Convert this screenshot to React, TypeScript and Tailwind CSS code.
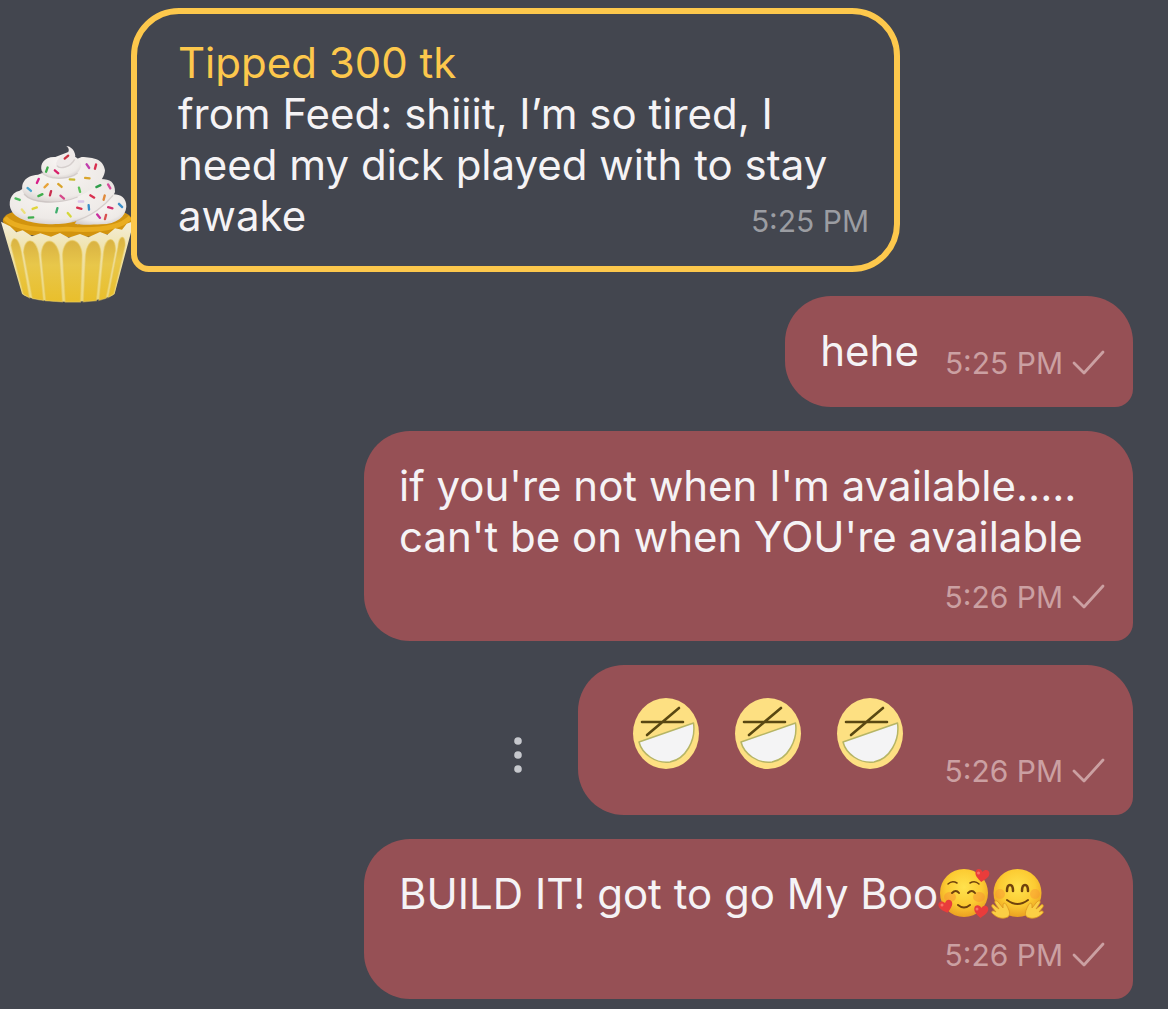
import React from 'react';
import { clsx } from 'clsx';

const SPRINKLES: [number, number, number, string][] = [
  [199, 84, -40, '#c9303f'], [141, 122, 110, '#3fae4c'], [170, 128, 40, '#d81f6a'], [264, 111, 55, '#c13fae'],
  [287, 113, 105, '#d9304f'], [114, 156, 115, '#d81f8a'], [138, 170, -45, '#e8a33a'], [180, 169, 40, '#d9a52c'],
  [216, 151, 5, '#c9b92e'], [262, 147, 5, '#d9a52c'], [239, 182, 75, '#5cc25a'], [295, 171, -25, '#2f9e4c'],
  [328, 172, 60, '#d64a9a'], [88, 181, 40, '#4aa5cf'], [121, 198, -25, '#3fae4c'], [152, 193, 105, '#c9304f'],
  [187, 204, 40, '#d64a8a'], [53, 210, 20, '#4cbb5c'], [277, 202, 30, '#d9304f'], [313, 206, 105, '#e08a3a'],
  [171, 244, 105, '#3fae6c'], [104, 237, -20, '#e0d53a'], [70, 246, 50, '#ecdf7a'], [93, 265, -5, '#3fae4c'],
  [208, 257, 50, '#d5d838'], [238, 237, 15, '#d9304f'], [267, 235, 85, '#3a8ec9'], [243, 217, 0, '#d9c4ea'],
  [331, 236, 15, '#d0306f'], [362, 229, 45, '#3a8ec9'], [296, 261, 50, '#c9309f'], [317, 264, 105, '#d9504f'],
];

function Cupcake() {
  return (
    <svg viewBox="0 45 402 480" className="h-40 w-[134px]" role="img" aria-label="Cupcake">
      <defs>
        <linearGradient id="panel" x1="0" y1="0" x2="0" y2="1">
          <stop offset="0" stopColor="#d9b243" />
          <stop offset="0.4" stopColor="#e8c74a" />
          <stop offset="1" stopColor="#e9bf2c" />
        </linearGradient>
        <linearGradient id="paper" x1="0" y1="0" x2="0" y2="1">
          <stop offset="0" stopColor="#f3eedb" />
          <stop offset="0.35" stopColor="#f0e3ac" />
          <stop offset="1" stopColor="#eed97a" />
        </linearGradient>
        <radialGradient id="cream" cx="0.45" cy="0.35" r="0.75">
          <stop offset="0" stopColor="#f8f5f3" />
          <stop offset="0.7" stopColor="#eeeae7" />
          <stop offset="1" stopColor="#cdc6c4" />
        </radialGradient>
      </defs>
      <path d="M8 275C15 245 60 240 200 240C340 240 390 242 397 275C390 310 300 325 200 325C100 325 15 310 8 275Z" fill="#d2940f" />
      <path d="M15 266C40 300 130 305 200 300C280 305 360 300 391 265" fill="none" stroke="#e9ad20" strokeWidth="14" />
      <path d="M3 278L30 292L49 310L68 304L96 322L121 313L153 323L180 312L206 326L240 315L265 325L300 309L322 317L345 298L366 302L380 284L402 276L344 494C310 526 100 526 66 494Z" fill="url(#paper)" />
      <g fill="url(#panel)" stroke="#e8c95c" strokeOpacity="0.5" strokeWidth="4">
        <path d="M33 350C36 318 56 322 64 370L88 506L70 495Z" />
        <path d="M71 370C72 325 106 322 116 375L130 514L97 508Z" />
        <path d="M124 378C126 323 168 323 178 378L187 518L137 515Z" />
        <path d="M188 378C190 320 243 320 246 378L241 519L196 519Z" />
        <path d="M257 378C262 323 302 323 302 375L289 515L250 518Z" />
        <path d="M311 370C316 320 348 320 346 365L318 508L297 514Z" />
        <path d="M354 355C357 316 377 316 375 350L341 495L325 505Z" />
      </g>
      <path d="M229 279C210 287 250 289 304 286C350 285 377 263 379 233C380 205 359 195 338 196C282 199 216 240 229 279Z" fill="url(#cream)" />
      <path d="M59 185C31 190 22 223 35 246C58 289 176 293 226 277C270 262 330 228 345 189C346 160 330 150 303 150L90 164Z" fill="url(#cream)" />
      <path d="M114 137C72 139 60 168 70 191C85 226 176 227 222 208C275 187 313 157 315 124C310 90 281 85 245 84Z" fill="url(#cream)" />
      <path d="M166 84C133 82 119 105 125 125C140 153 208 155 230 133C248 117 246 99 230 86L203 70Z" fill="url(#cream)" />
      <path d="M199 51C209 51 224 61 226 80C224 104 198 120 177 117C158 109 174 82 198 75C209 70 209 58 199 51Z" fill="#eee9e8" />
      <path d="M171 110C178 122 212 115 224 91M125 130C144 153 208 154 233 132M72 195C96 225 180 226 233 204M215 278C272 268 318 225 339 199" fill="none" stroke="#c4bcba" strokeWidth="4" opacity="0.6" />
      {SPRINKLES.map(([x, y, angle, color], i) => (
        <rect key={i} x={x - 10} y={y - 3} width="20" height="7" rx="3" fill={color} transform={`rotate(${angle} ${x} ${y})`} />
      ))}
    </svg>
  );
}

function LaughingFace() {
  return (
    <svg viewBox="0 0 102 90" className="h-[90px] w-[102px]" role="img" aria-label="Laughing">
      <ellipse cx="53" cy="39.500" rx="33" ry="35.500" fill="#fde082" />
      <path d="M26 48L80.500 29C83 46 73 65 57 68C43 70 29 60 26 48Z" fill="#f4f4f5" stroke="#b6b565" strokeWidth="1.500" strokeLinejoin="round" />
      <path d="M29 28H70M34 41L66 14" fill="none" stroke="#594812" strokeWidth="2.600" strokeLinecap="round" />
    </svg>
  );
}

function EmojiGradient({ id }: { id: string }) {
  return (
    <defs>
      <radialGradient id={id} cx="0.5" cy="0.38" r="0.62">
        <stop offset="0" stopColor="#ffe24e" />
        <stop offset="0.6" stopColor="#fccb32" />
        <stop offset="1" stopColor="#eba021" />
      </radialGradient>
    </defs>
  );
}

function SmilingWithHearts() {
  const heart = 'M0 6C-5 2-7 0-7-3C-7-7-2-8 0-4C2-8 7-7 7-3C7 0 5 2 0 6Z';
  return (
    <svg viewBox="0 0 53 52" className="inline-block h-[52px] w-[53px] align-top" role="img" aria-label="Smiling face with hearts">
      <EmojiGradient id="hearts-face" />
      <circle cx="26" cy="25" r="24" fill="url(#hearts-face)" />
      <ellipse cx="12" cy="29" rx="6" ry="5" fill="#f78b35" opacity="0.45" />
      <ellipse cx="41" cy="29" rx="6" ry="5" fill="#f78b35" opacity="0.45" />
      <g fill="none" stroke="#70430d" strokeWidth="2" strokeLinecap="round">
        <path d="M10 16Q14 12 19 15M32 15Q37 12 41 16" strokeWidth="1.500" />
        <path d="M14 25Q18 21 21 25M30 25Q34 21 37 25" />
        <path d="M20 37Q26 42 32 37" />
      </g>
      <g fill="#e93c3b">
        <path d={heart} transform="translate(44 8) rotate(8)" />
        <path d={heart} transform="translate(8 39) rotate(-14)" />
        <path d={heart} transform="translate(43 44) rotate(5)" />
      </g>
      <g fill="#ff8a77" opacity="0.7">
        <circle cx="40.500" cy="5" r="1.500" />
        <circle cx="4" cy="37" r="1.500" />
        <circle cx="39" cy="41" r="1.500" />
      </g>
    </svg>
  );
}

function Hugging() {
  const hand = 'M17 49C10 52 5 49 1 45C0 43 2 42 5 44L1 39C0 36 2 36 4 38L8 41L4 35C3 32 6 32 8 35L12 40L12 37C12 34 15 35 16 38C18 42 20 46 17 49Z';
  return (
    <svg viewBox="0 0 53 52" className="inline-block h-[52px] w-[53px] align-top" role="img" aria-label="Hugging face">
      <EmojiGradient id="hug-face" />
      <circle cx="26.500" cy="25" r="24" fill="url(#hug-face)" />
      <ellipse cx="9" cy="26" rx="5" ry="5" fill="#f78b35" opacity="0.4" />
      <ellipse cx="44" cy="26" rx="5" ry="5" fill="#f78b35" opacity="0.4" />
      <g fill="none" stroke="#70430d" strokeWidth="2.500" strokeLinecap="round">
        <path d="M16 23C16 15 22 15 22 23M31 23C31 15 37 15 37 23" />
        <path d="M16 32Q26.500 40 37 32" strokeWidth="2" />
      </g>
      <g fill="#fbcf45" stroke="#dc9520" strokeWidth="0.800" strokeLinejoin="round">
        <path d={hand} />
        <path d={hand} transform="matrix(-1 0 0 1 53 0)" />
      </g>
    </svg>
  );
}

function SentTime({ time }: { time: string }) {
  return (
    <div className="ml-auto flex h-[26px] items-center gap-2 whitespace-nowrap text-[30px] leading-[26px] text-[#cba0a2]">
      <time>{time}</time>
      <svg viewBox="0 0 34 26" className="h-[26px] w-[34px]" fill="none" stroke="currentColor" strokeWidth="2.800" strokeLinecap="round" strokeLinejoin="round" role="img" aria-label="Sent">
        <path d="M3 13L13 23L32 2" />
      </svg>
    </div>
  );
}

interface BubbleProps {
  time: string;
  children: React.ReactNode;
  className?: string;
}

function SentBubble({ time, children, className }: BubbleProps) {
  return (
    <div className={clsx('flex max-w-[769px] flex-wrap items-end gap-x-[26px] gap-y-[22px] rounded-[46px] rounded-br-[18px] bg-[#965055] pt-[29px] pr-7 pb-[31px] pl-[35px]', className)}>
      <div>{children}</div>
      <SentTime time={time} />
    </div>
  );
}

export default function App() {
  return (
    <main className="flex min-h-screen flex-col items-end gap-6 bg-[#43464f] pt-2 pr-[35px] pb-[11px] font-['Inter',sans-serif] text-[42px] leading-[51px] text-[#f5f3f5]">
      <div className="flex items-end self-start">
        <div className="-mr-[3px] -mb-8 shrink-0">
          <Cupcake />
        </div>
        <div className="relative max-w-[769px] rounded-[48px] rounded-bl-[18px] border-6 border-[#fdc84c] pt-[23px] pr-[25px] pb-[25px] pl-[41px]">
          <p className="text-[#fdc84c]">Tipped 300 tk</p>
          <p>
            from Feed: shiiit, I’m so tired, I need my dick played with to stay awake
            <time className="float-right mt-[18px] text-[30px] leading-[26px] text-[#9b9da2]">5:25 PM</time>
          </p>
        </div>
      </div>

      <SentBubble time="5:25 PM">hehe</SentBubble>

      <SentBubble time="5:26 PM">
        if you're not when I'm available..... can't be on when YOU're available
      </SentBubble>

      <div className="flex items-center gap-8">
        <button type="button" aria-label="Message options" className="mt-[30px] flex h-14 w-14 items-center justify-center text-[#c6c8cd]">
          <svg viewBox="0 0 8 36" className="h-9 w-2" fill="currentColor">
            <circle cx="4" cy="4" r="3.800" />
            <circle cx="4" cy="18" r="3.800" />
            <circle cx="4" cy="32" r="3.800" />
          </svg>
        </button>
        <SentBubble time="5:26 PM">
          <div className="flex">
            <LaughingFace />
            <LaughingFace />
            <LaughingFace />
          </div>
        </SentBubble>
      </div>

      <SentBubble time="5:26 PM">
        BUILD IT! got to go My Boo
        <SmilingWithHearts />
        <Hugging />
      </SentBubble>
    </main>
  );
}
